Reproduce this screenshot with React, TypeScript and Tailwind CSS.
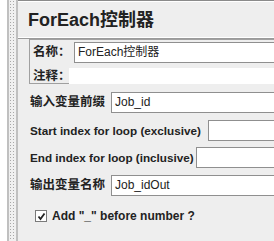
import React from 'react';

const font = { fontFamily: '"Liberation Sans", "Noto Sans CJK SC", sans-serif' };

const Field: React.FC<{ value?: string; className?: string }> = ({ value = '', className = '' }) => (
  <div
    className={`h-[21px] bg-white border border-[#8f8f8f] border-r-0 pl-[3px] text-[12px] leading-[19px] text-[#222] ${className}`}
  >
    {value}
  </div>
);

const Row: React.FC<{ label: string; value?: string; fieldLeft: string; size: string; className?: string }> = ({
  label,
  value,
  fieldLeft,
  size,
  className = '',
}) => (
  <div className={`flex items-center ${className}`}>
    <span className={`${fieldLeft} ${size} shrink-0 font-bold text-[#222] whitespace-nowrap`}>{label}</span>
    <Field value={value} className="flex-1" />
  </div>
);

export default function App() {
  return (
    <div className="w-[274px] h-[241px] overflow-hidden flex bg-[#eeeeee]" style={font}>
      {/* splitter strip */}
      <div className="w-[7px] bg-white shrink-0" />
      <div className="w-[11px] shrink-0 border-l-2 border-r-2 border-[#c0c0c0] bg-[radial-gradient(#a8a8a8_0.7px,transparent_0.8px)] bg-[length:3px_3px] bg-[#f0f0f0]" />

      <div className="flex-1 flex flex-col border-t border-[#8a8a8a]">
        {/* title */}
        <div className="h-[37px] flex items-center pl-[10px] border-t border-white border-b border-b-white shadow-[0_1px_0_#9a9a9a]">
          <span className="text-[18px] font-bold text-[#222] mt-[1px]">ForEach控制器</span>
        </div>

        {/* name / comment box */}
        <div className="ml-[11px] mt-[1px] h-[45px] border border-r-0 border-[#a0a0a0] flex flex-col pl-[3px] pt-[2px]">
          <div className="flex items-center h-[21px]">
            <span className="w-[41px] shrink-0 text-[12.5px] font-bold text-[#222] whitespace-nowrap">名称：</span>
            <Field value="ForEach控制器" className="flex-1" />
          </div>
          <div className="flex items-center h-[16px] mt-[5px]">
            <span className="w-[36px] shrink-0 text-[12.5px] font-bold text-[#222] whitespace-nowrap">注释：</span>
            <div className="flex-1 h-[16px] bg-white" />
          </div>
        </div>

        <div className="flex flex-col pl-[12px] mt-[8px]">
          <Row label="输入变量前缀" value="Job_id" fieldLeft="w-[81px]" size="text-[12.5px]" />
          <Row label="Start index for loop (exclusive)" fieldLeft="w-[178px]" size="text-[11.7px]" className="mt-[7px]" />
          <Row label="End index for loop (inclusive)" fieldLeft="w-[166px]" size="text-[11.7px]" className="mt-[6px]" />
          <Row label="输出变量名称" value="Job_idOut" fieldLeft="w-[81px]" size="text-[12.5px]" className="mt-[7px]" />

          <div className="flex items-center mt-[11px] pl-[5px]">
            <div className="w-[12px] h-[12px] border border-[#7a7a7a] bg-white flex items-center justify-center">
              <svg width="9" height="9" viewBox="0 0 9 9">
                <path d="M1.5 4.5 L3.5 7 L7.5 1.5" stroke="#222" strokeWidth="1.8" fill="none" />
              </svg>
            </div>
            <span className="ml-[5px] text-[12px] font-bold text-[#222]">Add "_" before number ?</span>
          </div>
        </div>
      </div>
    </div>
  );
}
